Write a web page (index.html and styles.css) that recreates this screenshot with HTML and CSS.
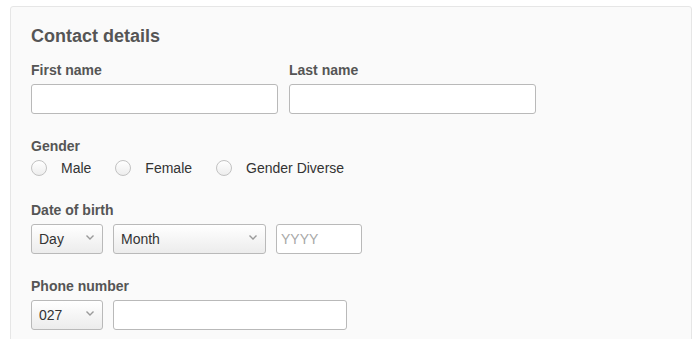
FILE: index.html
```html
<!DOCTYPE html>
<html lang="en">
<head>
    <meta charset="UTF-8">
    <title>Contact details</title>
    <link rel="stylesheet" href="styles.css">
</head>
<body>
    <div class="panel">
        <h2 class="panel-title">Contact details</h2>

        <div class="name-row">
            <div class="field">
                <label class="field-label" for="firstName">First name</label>
                <input class="text-input" id="firstName" type="text">
            </div>
            <div class="field">
                <label class="field-label" for="lastName">Last name</label>
                <input class="text-input" id="lastName" type="text">
            </div>
        </div>

        <div class="section">
            <span class="field-label tight">Gender</span>
            <div class="radio-row">
                <label class="radio"><input type="radio" name="gender"><span>Male</span></label>
                <label class="radio"><input type="radio" name="gender"><span>Female</span></label>
                <label class="radio"><input type="radio" name="gender"><span>Gender Diverse</span></label>
            </div>
        </div>

        <div class="section">
            <span class="field-label">Date of birth</span>
            <div class="inline-row">
                <div class="select-wrap day">
                    <select class="select">
                        <option>Day</option>
                    </select>
                    <svg class="chevron" width="8" height="5" viewBox="0 0 8 5"><path d="M0.5 0.5 L4 4 L7.5 0.5" fill="none" stroke="#9a9a9a" stroke-width="1.4"/></svg>
                </div>
                <div class="select-wrap month">
                    <select class="select">
                        <option>Month</option>
                    </select>
                    <svg class="chevron" width="8" height="5" viewBox="0 0 8 5"><path d="M0.5 0.5 L4 4 L7.5 0.5" fill="none" stroke="#9a9a9a" stroke-width="1.4"/></svg>
                </div>
                <input class="text-input year" type="text" placeholder="YYYY">
            </div>
        </div>

        <div class="section">
            <span class="field-label">Phone number</span>
            <div class="inline-row">
                <div class="select-wrap day">
                    <select class="select">
                        <option>027</option>
                    </select>
                    <svg class="chevron" width="8" height="5" viewBox="0 0 8 5"><path d="M0.5 0.5 L4 4 L7.5 0.5" fill="none" stroke="#9a9a9a" stroke-width="1.4"/></svg>
                </div>
                <input class="text-input phone" type="text">
            </div>
        </div>
    </div>
</body>
</html>
```

FILE: styles.css
```css
body {
    margin: 6px 5px 0 10px;
    font-family: "Liberation Sans", Arial, sans-serif;
    background-color: #fff;
}
.panel {
    background-color: #fafafa;
    border: 1px solid #e6e6e6;
    border-radius: 3px;
    padding: 19px 20px 20px;
}
.panel-title {
    margin: 0;
    font-size: 18px;
    line-height: 20px;
    font-weight: bold;
    color: #555;
}
.name-row {
    display: grid;
    grid-template-columns: 247px 247px;
    column-gap: 11px;
    margin-top: 16px;
}
.field-label {
    display: block;
    font-size: 14px;
    line-height: 16px;
    font-weight: bold;
    color: #555;
    margin-bottom: 6px;
}
.field-label.tight {
    margin-bottom: 4px;
}
.text-input {
    box-sizing: border-box;
    display: block;
    width: 100%;
    height: 30px;
    margin: 0;
    padding: 0 4px;
    border: 1px solid #b9b9b9;
    border-radius: 3px;
    background-color: #fff;
    font-family: "Liberation Sans", Arial, sans-serif;
    font-size: 14px;
    color: #333;
}
.text-input::placeholder {
    color: #a8a8a8;
}
.section {
    margin-top: 24px;
}
.radio-row {
    display: flex;
    gap: 24px;
    height: 20px;
    align-items: center;
}
.radio {
    display: flex;
    align-items: center;
    font-size: 14px;
    color: #333;
}
.radio input {
    appearance: none;
    -webkit-appearance: none;
    box-sizing: border-box;
    width: 16px;
    height: 16px;
    margin: 0 14px 0 0;
    border: 1px solid #c2c2c2;
    border-radius: 50%;
    background: linear-gradient(#fff, #ededed);
}
.inline-row {
    display: flex;
    gap: 10px;
}
.select-wrap {
    position: relative;
    height: 30px;
}
.select-wrap.day {
    width: 72px;
}
.select-wrap.month {
    width: 153px;
}
.select {
    appearance: none;
    -webkit-appearance: none;
    box-sizing: border-box;
    width: 100%;
    height: 30px;
    margin: 0;
    padding: 0 20px 0 7px;
    border: 1px solid #b9b9b9;
    border-radius: 3px;
    background: linear-gradient(#fff, #ececec);
    font-family: "Liberation Sans", Arial, sans-serif;
    font-size: 14px;
    color: #333;
}
.chevron {
    position: absolute;
    right: 9px;
    top: 11px;
    pointer-events: none;
}
.text-input.year {
    width: 86px;
}
.text-input.phone {
    width: 234px;
}
```
